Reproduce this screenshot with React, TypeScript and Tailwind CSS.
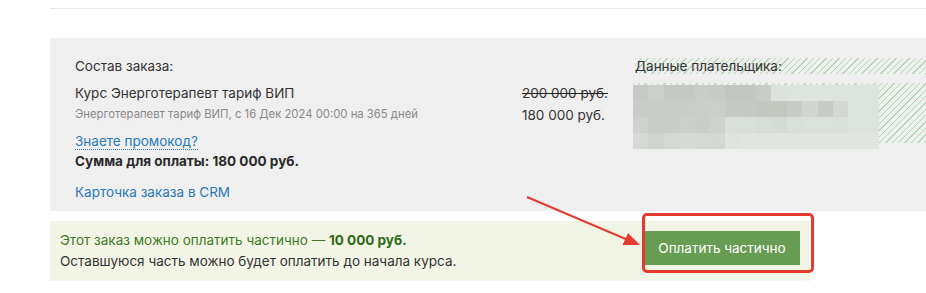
import React from "react";

const mosaic: string[][] = [
  ["#c6cbc5", "#cbd0ca", "#c5cac4", "#c5cac4", "#c9cec8", "#c7ccc6", "#c3c8c2", "#c3c8c2", "#c8cdc7", "#dce2dc", "#dde3dd", "#dde3dd", "#dde3dd", "#dde3dd", "#dde3dd", "#dde3dd"],
  ["#c8cdc7", "#c9cec8", "#c9cec8", "#c9cec8", "#cad0c9", "#cbd1ca", "#c5cac4", "#c5cac4", "#c3c8c1", "#c3c8c1", "#c7ccc6", "#d0d5cf", "#c7ccc6", "#d2d7d1", "#dde3dd", "#dde3dd"],
  ["#cdd2cc", "#c8cdc7", "#c8cdc7", "#cbd0ca", "#c9cec8", "#cdd2cc", "#d9dfd9", "#d8ded8", "#d6dcd6", "#d4dad4", "#d8ded8", "#dae0da", "#dae0da", "#d9dfd9", "#dde3dd", "#dde3dd"],
  ["#d6dad5", "#d0d4cf", "#d5d9d4", "#d6dbd5", "#d4d9d3", "#d3d8d2", "#dee3de", "#e0e5e0", "#e0e5e0", "#e0e5e0", "#e0e5e0", "#e0e5e0", "#e0e5e0", "#e0e5e0", "#e0e5e0", "#e0e5e0"],
];

export default function App() {
  return (
    <div className="relative w-[926px] h-[293px] overflow-hidden bg-white text-[#333] font-['Inter','Noto_Sans',sans-serif]">
      <div className="ml-[50px] pt-[8px]">
        <div className="h-px bg-[#e7e7e7]" />
      </div>

      <div className="ml-[50px] mt-[29px] h-[173px] w-[900px] bg-[#efefef] flex">
        <div className="w-[472px] pl-[25px] pt-[19px] flex flex-col">
          <div className="text-[13.5px] leading-[18px]">Состав заказа:</div>
          <div className="mt-[9px] text-[13.5px] leading-[18px]">Курс Энерготерапевт тариф ВИП</div>
          <div className="mt-[4px] text-[11.3px] leading-[16px] text-[#8a8a8a]">Энерготерапевт тариф ВИП, с 16 Дек 2024 00:00 на 365 дней</div>
          <div className="mt-[9px] leading-[18px]">
            <span className="text-[13.5px] text-[#2a7ab9] border-b border-dotted border-[#2a7ab9]">Знаете промокод?</span>
          </div>
          <div className="mt-[2px] text-[13.5px] leading-[18px] font-bold text-[#2a2a2a]">Сумма для оплаты: 180 000 руб.</div>
          <div className="mt-[13px] text-[13.5px] leading-[18px] text-[#2a7ab9]">Карточка заказа в CRM</div>
        </div>
        <div className="w-[111px] pt-[44px] text-[13.5px] leading-[22px]">
          <div className="line-through decoration-[#222]">200 000 руб.</div>
          <div>180 000 руб.</div>
        </div>
        <div className="flex-1 pt-[20px]">
          <div className="ml-[2px] h-[16px] flex items-center text-[13.5px] leading-[16px] bg-[repeating-linear-gradient(135deg,#b3d6b3_0px,#b3d6b3_1px,transparent_1px,transparent_4.5px)]">
            Данные плательщика:
          </div>
          <div className="mt-[9px] h-[60px] bg-[repeating-linear-gradient(135deg,#b3d6b3_0px,#b3d6b3_1px,transparent_1px,transparent_4.5px)]">
            <div className="w-[246px] pt-[2px] flex flex-col">
              {mosaic.map((row, r) => (
                <div key={r} className="flex h-[16px]">
                  {row.map((c, i) => (
                    <div key={i} className="h-full flex-1" style={{ background: c }} />
                  ))}
                </div>
              ))}
            </div>
          </div>
        </div>
      </div>

      <div className="ml-[50px] mt-[10px] w-[760px] h-[60px] bg-[#f2f5e6] flex items-start justify-between pl-[10px] pr-[10px]">
        <div className="flex flex-col text-[13.5px] leading-[21px] pt-[9px]">
          <div className="text-[#3f7a24]">
            Этот заказ можно оплатить частично — <span className="font-bold text-[#2f6a16]">10 000 руб.</span>
          </div>
          <div className="text-[#333]">Оставшуюся часть можно будет оплатить до начала курса.</div>
        </div>
        <button className="mt-[10px] w-[156px] h-[34px] bg-[#679d52] text-white text-[13.5px] flex items-center justify-center">
          Оплатить частично
        </button>
      </div>

      <div className="absolute left-[642px] top-[213px] w-[172px] h-[60px] border-[3px] border-[#e53a2f] rounded-[5px]" />
      <svg className="absolute left-0 top-0" width="926" height="293" viewBox="0 0 926 293">
        <line x1="527" y1="197" x2="628" y2="240" stroke="#e53a2f" strokeWidth="2" />
        <polygon points="640,245 622.5,245 628,233" fill="#e53a2f" />
      </svg>
    </div>
  );
}
